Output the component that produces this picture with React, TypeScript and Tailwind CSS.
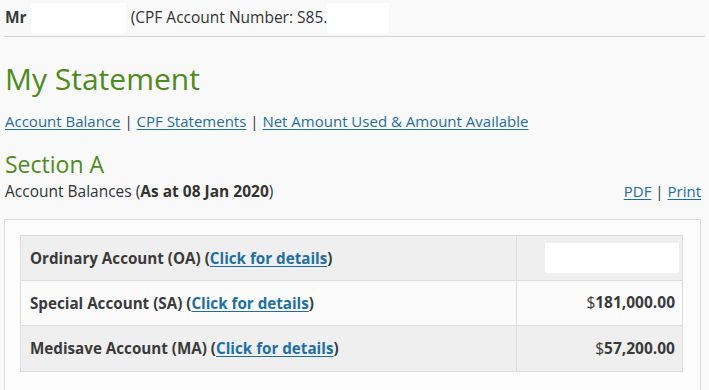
import React from "react";

const font = "font-['Open_Sans','Noto_Sans',sans-serif]";

function Row({ label, value, shaded, hideValue }: { label: string; value?: string; shaded: boolean; hideValue?: boolean }) {
  return (
    <div className={`flex h-[45px] border-b border-[#dcdcdc] last:border-b-0 ${shaded ? "bg-[#efefef]" : "bg-[#fbfbfb]"}`}>
      <div className="flex flex-1 items-center border-r border-[#dcdcdc] pl-[9px] text-[15.2px] font-bold text-[#3a3a3a]">
        <span>
          {label} (<a className="text-[#1d6fa3] underline underline-offset-2" href="#">Click for details</a>)
        </span>
      </div>
      <div className={`flex w-[165px] items-center justify-end text-[15.5px] font-bold text-[#3a3a3a] ${hideValue ? "pr-[3px]" : "pr-[7px]"}`}>
        {hideValue ? (
          <div className="h-[30px] w-[134px] bg-white" />
        ) : (
          <span>
            <span className="font-normal">$</span>
            {value}
          </span>
        )}
      </div>
    </div>
  );
}

export default function App() {
  return (
    <div className={`min-h-screen w-full bg-[#f9f9f9] text-[#333] ${font}`}>
      <div className="mx-[4px] flex h-[37px] items-center border-b border-[#d4d4d4] pl-[1px] text-[15.5px]">
        <span className="font-bold text-[#3a3a3a]">Mr</span>
        <div className="ml-[4px] h-[30px] w-[95px] bg-white" />
        <span className="ml-[5px] text-[#333]">(CPF Account Number: S85.</span>
        <div className="h-[30px] w-[62px] bg-white" />
      </div>

      <div className="px-[5px]">
        <h1 className="mt-[22px] text-[30px] leading-[40px] text-[#4f8a1e]">My Statement</h1>
        <div className="mt-[11px] text-[15px] leading-[22px] text-[#333]">
          <a href="#" className="text-[#1f6d9e] underline underline-offset-2">Account Balance</a>
          <span> | </span>
          <a href="#" className="text-[#1f6d9e] underline underline-offset-2">CPF Statements</a>
          <span> | </span>
          <a href="#" className="text-[#1f6d9e] underline underline-offset-2">Net Amount Used &amp; Amount Available</a>
        </div>
        <h2 className="mt-[16px] text-[23px] leading-[32px] text-[#4f8a1e]">Section A</h2>
        <div className="mt-[1px] flex items-center justify-between pr-[3px] text-[15.5px] leading-[20px]">
          <span className="text-[#333]">
            Account Balances (<b>As at 08 Jan 2020</b>)
          </span>
          <span className="text-[15px]">
            <a href="#" className="text-[#1f6d9e] underline underline-offset-2">PDF</a>
            <span> | </span>
            <a href="#" className="text-[#1f6d9e] underline underline-offset-2">Print</a>
          </span>
        </div>
      </div>

      <div className="ml-[4px] mr-[8px] mt-[18px] border border-[#dadada] bg-[#fcfcfc] pl-[15px] pr-[17px] pt-[15px] pb-[20px]">
        <div className="border border-[#dcdcdc]">
          <Row label="Ordinary Account (OA)" shaded hideValue />
          <Row label="Special Account (SA)" value="181,000.00" shaded={false} />
          <Row label="Medisave Account (MA)" value="57,200.00" shaded />
        </div>
      </div>
    </div>
  );
}
